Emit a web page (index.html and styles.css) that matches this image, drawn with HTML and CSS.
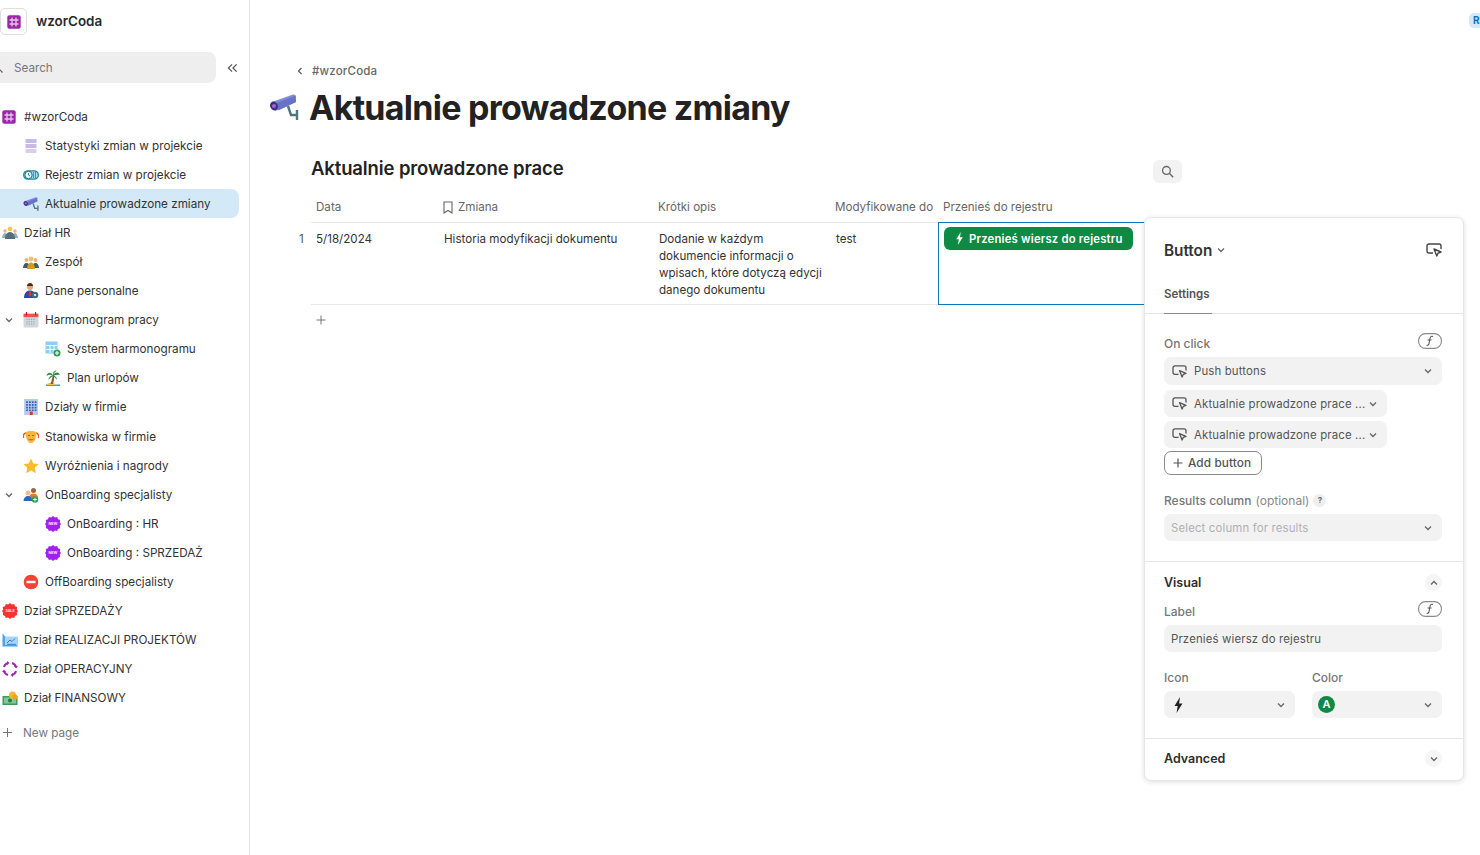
FILE: index.html
```html
<!DOCTYPE html>
<html lang="pl">
<head>
<meta charset="utf-8">
<title>wzorCoda</title>
<link rel="stylesheet" href="styles.css">
</head>
<body>
<svg class="defs" width="0" height="0" aria-hidden="true">
  <symbol id="hash" viewBox="0 0 14 14"><rect x="0.300" y="0.300" width="13.400" height="13.400" rx="2" fill="#9b27a6"/><path d="M5 2.500v9M9 2.500v9M2.500 5h9M2.500 9h9" stroke="#e8c4ec" stroke-width="1.300" fill="none"/></symbol>
  <symbol id="cam" viewBox="0 0 30 26"><path d="M19 12l3 9h6M28 16v10" stroke="#4f7480" stroke-width="2.400" fill="none"/><path d="M3 8L24 .5q2-.5 3 1.500v6L10 16l-4 .5z" fill="#7d8bd8"/><path d="M5 10L26 2l1 6L10 16z" fill="#6673c4"/><ellipse cx="5" cy="12" rx="3.800" ry="4.600" fill="#3c2f7a" transform="rotate(-25 5 12)"/><circle cx="5" cy="12" r="2.100" fill="#a75fe0"/></symbol>
  <symbol id="btn" viewBox="0 0 16 14"><path d="M7 10H3a2 2 0 0 1-2-2V3a2 2 0 0 1 2-2h10a2 2 0 0 1 2 2v3" fill="none" stroke="currentColor" stroke-width="1.400"/><path d="M8 6l7 3-3 1.200L10.800 13z" fill="none" stroke="currentColor" stroke-width="1.400" stroke-linejoin="round"/></symbol>
  <symbol id="chev" viewBox="0 0 8 6"><path d="M1 1.500l3 3 3-3" fill="none" stroke="currentColor" stroke-width="1.300"/></symbol>
  <symbol id="bolt" viewBox="0 0 10 16"><path d="M6.500 0L1 9h3.200L3 16l6-9.500H5.600z" fill="currentColor"/></symbol>
  <symbol id="fx" viewBox="0 0 24 16"><rect x="0.600" y="0.600" width="22.800" height="14.800" rx="7" fill="none" stroke="#8a8a8a" stroke-width="1.100"/><path d="M15 3.500c-2-.7-2.700.2-3 2l-1 5c-.3 1.500-1 2-2.400 1.700M9.500 7h4" fill="none" stroke="#555" stroke-width="1.100"/></symbol>
  <symbol id="burst" viewBox="0 0 16 16"><path d="M8 0l1.900 1.500L12.200 1l.8 2.200 2.200.9-.4 2.300L16 8l-1.200 1.700.4 2.300-2.200.9-.8 2.200-2.300-.5L8 16l-1.900-1.400-2.300.5-.8-2.200-2.200-.9.400-2.300L0 8l1.200-1.600L.8 4.100 3 3.200 3.800 1l2.300.5z" fill="currentColor"/></symbol>
</svg>

<div class="app">
  <aside class="sidebar">
    <div class="brand">
      <span class="brand-box"><svg class="i14"><use href="#hash"/></svg></span>
      <span class="brand-name">wzorCoda</span>
    </div>
    <div class="search-row">
      <div class="search"><svg class="search-ico" viewBox="0 0 12 12"><circle cx="4" cy="4" r="3.200" fill="none" stroke="#666" stroke-width="1.200"/><path d="M6.500 6.500l4 4" stroke="#666" stroke-width="1.200"/></svg><span>Search</span></div>
      <svg class="collapse" viewBox="0 0 12 10"><path d="M5.500 1L1.500 5l4 4M10.500 1L6.500 5l4 4" fill="none" stroke="#555" stroke-width="1.300"/></svg>
    </div>
    <nav class="nav">
      <a class="row l0"><svg class="ico small"><use href="#hash"/></svg>#wzorCoda</a>
      <a class="row l1"><svg class="ico" viewBox="0 0 16 16"><rect x="2.500" y="1" width="11" height="4" fill="#c9b9e8"/><rect x="2.500" y="6" width="11" height="4" fill="#c9b9e8"/><rect x="2.500" y="11" width="11" height="4" fill="#d8cdee"/></svg>Statystyki zmian w projekcie</a>
      <a class="row l1"><svg class="ico" viewBox="0 0 16 10"><rect x="0.600" y="0.800" width="14.800" height="8.400" rx="4.200" fill="#9fe0e8" stroke="#1c8ea0" stroke-width="1.200"/><circle cx="5.500" cy="5" r="3.700" fill="#eef8fa" stroke="#176a80" stroke-width="1"/><path d="M5.500 3v2l1.500 1" stroke="#176a80" stroke-width=".8" fill="none"/><path d="M10.500 2v6M12.500 2v6" stroke="#1c8ea0" stroke-width=".8"/></svg>Rejestr zmian w projekcie</a>
      <a class="row l1 active"><svg class="ico"><use href="#cam"/></svg>Aktualnie prowadzone zmiany</a>
      <a class="row l0"><svg class="ico" viewBox="0 0 16 14"><circle cx="8" cy="3" r="2.300" fill="#f2c14e"/><circle cx="3" cy="5" r="1.700" fill="#f0b090"/><circle cx="13" cy="5" r="1.700" fill="#f0b090"/><path d="M0 12c0-3 2-5 3-5s3 2 3 5zM10 12c0-3 2-5 3-5s3 2 3 5z" fill="#8fb1bd"/><path d="M3 13c0-4 2-7 5-7s5 3 5 7z" fill="#546e7a"/></svg>Dział HR</a>
      <a class="row l1"><svg class="ico" viewBox="0 0 16 14"><circle cx="3.500" cy="5" r="2" fill="#e9b872"/><circle cx="12.500" cy="5" r="2" fill="#e9b872"/><path d="M0 13c0-3 1.500-5 3.500-5S7 10 7 13zM9 13c0-3 1.500-5 3.500-5s3.500 2 3.500 5z" fill="#3d5a78"/><circle cx="8" cy="4" r="2.400" fill="#f0bf70"/><path d="M4 14c0-4 2-6.500 4-6.500S12 10 12 14z" fill="#d59a1e"/></svg>Zespół</a>
      <a class="row l1"><svg class="ico" viewBox="0 0 16 16"><circle cx="7" cy="4" r="3" fill="#e8a37a"/><path d="M4 3c0-2 1.500-3 3-3s3 1 3 3z" fill="#4a2c1d"/><path d="M1 15c0-5 2.500-7.500 6-7.500s6 2.500 6 7.500z" fill="#2e46a8"/><path d="M6 8h2l.5 4L7 14l-1.500-2z" fill="#d33"/><circle cx="12" cy="12" r="3.300" fill="#3f6d80"/><circle cx="12" cy="12" r="1.100" fill="#fff"/></svg>Dane personalne</a>
      <a class="row l1 has-caret"><svg class="caret"><use href="#chev"/></svg><svg class="ico" viewBox="0 0 14 14"><rect x="0.500" y="1.500" width="13" height="12" rx="1" fill="#cfd8dc"/><rect x="0.500" y="1.500" width="13" height="3" fill="#ef5350"/><path d="M3 0v3M11 0v3" stroke="#b71c1c" stroke-width="1"/><path d="M3 6.500h8M3 8.500h8M3 10.500h8" stroke="#90a4ae" stroke-width="1" stroke-dasharray="1 1"/></svg>Harmonogram pracy</a>
      <a class="row l2"><svg class="ico" viewBox="0 0 16 16"><rect x="0.500" y="0.500" width="12" height="12" fill="#90caf9"/><path d="M1 4.500h11M1 8.500h11M5 4v8M9 4v8" stroke="#fff" stroke-width="1"/><circle cx="12" cy="12" r="3.500" fill="#2e9e4f"/><path d="M12 10v4M10 12h4" stroke="#fff" stroke-width="1.100"/></svg>System harmonogramu</a>
      <a class="row l2"><svg class="ico" viewBox="0 0 16 16"><path d="M1 14.500h14V16H1z" fill="#29a9e0"/><path d="M1 15c2-3 8-3 10 0z" fill="#f7c04a"/><path d="M7.500 5c0 3-1 6-2 9h2.500c1-3 1.300-6 1-9z" fill="#8d5a3a"/><path d="M8 5.500C6 1.500 2.500 2 1.500 6c2-1.500 4-1.500 6.500-.5zM8 5.500c2-4 6-4 7-.5-2-.5-4.500 0-7 .5zM8 5.500C7.500 3 9 .5 11.500 .5 9.800 2 9 3.500 8 5.500zM8 5.500C5.500 5.500 3.500 7.500 3.500 10 5 8 7 6.800 8 5.500zM8 5.500c2 0 4 2 4 4.500-1-2-3-3.200-4-4.500z" fill="#2e8b40"/></svg>Plan urlopów</a>
      <a class="row l1"><svg class="ico" viewBox="0 0 14 14"><rect x="1" y="0" width="12" height="14" fill="#b9c8ee"/><path d="M3.500 2v8.500M6 2v8.500M8.500 2v8.500M11 2v8.500" stroke="#2a5cc0" stroke-width="1.500" stroke-dasharray="1.600 .8"/><rect x="6" y="11" width="2.500" height="3" fill="#d33"/></svg>Działy w firmie</a>
      <a class="row l1 nudge"><svg class="ico" viewBox="0 0 16 16"><path d="M3 4c-2 0-3 2-2.500 5M13 4c2 0 3 2 2.500 5" stroke="#e2572c" stroke-width="1.400" fill="none"/><path d="M2.500 3c3-1.500 8-1.500 11 0 0 6-2 11-5.500 11S2.500 9 2.500 3z" fill="#f6b73c"/><path d="M5 6.500h2M9 6.500h2M5.500 10c1.500 1.200 3.500 1.200 5 0" stroke="#a0621a" stroke-width="1" fill="none"/></svg>Stanowiska w firmie</a>
      <a class="row l1"><svg class="ico" viewBox="0 0 16 16"><path d="M8 .500l2.300 5 5.400.6-4 3.700 1.100 5.400L8 12.500l-4.800 2.700 1.100-5.400-4-3.700 5.400-.6z" fill="#fbbc2c"/></svg>Wyróżnienia i nagrody</a>
      <a class="row l1 has-caret"><svg class="caret"><use href="#chev"/></svg><svg class="ico" viewBox="0 0 16 16"><circle cx="10.500" cy="3.500" r="2.500" fill="#a1642e"/><path d="M6 11c0-3 2-4.500 4.500-4.500S15 8 15 11z" fill="#e57c2b"/><circle cx="5" cy="6" r="2.500" fill="#f0bf90"/><path d="M.500 14c0-3 2-5 4.500-5s4.500 2 4.500 5z" fill="#2a66c8"/><circle cx="12" cy="12.500" r="3.200" fill="#2e9e4f"/><path d="M12 10.700v3.600M10.200 12.500h3.600" stroke="#fff"/></svg>OnBoarding specjalisty</a>
      <a class="row l2"><svg class="ico burst new" viewBox="0 0 16 16"><use href="#burst"/><text x="8" y="9.300" font-size="3.800" font-weight="700" text-anchor="middle" fill="#f6e6ff" font-family="Inter">NEW</text></svg>OnBoarding : HR</a>
      <a class="row l2"><svg class="ico burst new" viewBox="0 0 16 16"><use href="#burst"/><text x="8" y="9.300" font-size="3.800" font-weight="700" text-anchor="middle" fill="#f6e6ff" font-family="Inter">NEW</text></svg>OnBoarding : SPRZEDAŻ</a>
      <a class="row l1"><svg class="ico" viewBox="0 0 16 16"><circle cx="8" cy="8" r="7.300" fill="#f44336"/><rect x="3.500" y="6.800" width="9" height="2.400" fill="#fff"/></svg>OffBoarding specjalisty</a>
      <a class="row l0"><svg class="ico burst sale" viewBox="0 0 16 16"><use href="#burst"/><text x="8" y="9.300" font-size="3.600" font-weight="700" text-anchor="middle" fill="#ffe0dc" font-family="Inter">SALE</text></svg>Dział SPRZEDAŻY</a>
      <a class="row l0"><svg class="ico" viewBox="0 0 16 14"><path d="M.500 .5v13h15V4H4C2.500 4 2 1.500 .500 .5z" fill="#4aa3ee"/><path d="M3 3.500h12.500V12H3z" fill="#a9d6f8"/><path d="M5 10l3-3 2 1.500 3-3M5 11.300h9" stroke="#2a7fd0" stroke-width="1" fill="none"/></svg>Dział REALIZACJI PROJEKTÓW</a>
      <a class="row l0"><svg class="ico" viewBox="0 0 16 16"><path d="M2 6c.5-2 2-3.500 4-4M10 2c2 .5 3.500 2 4 4M14 10c-.5 2-2 3.500-4 4M6 14c-2-.5-3.500-2-4-4" fill="none" stroke="#9c27b0" stroke-width="2"/><path d="M5 0l2.500 2L5 4zM16 5l-2 2.500L12 5zM11 16l-2.500-2L11 12zM0 11l2-2.500L4 11z" fill="#9c27b0"/></svg>Dział OPERACYJNY</a>
      <a class="row l0"><svg class="ico" viewBox="0 0 16 14"><rect x="0.500" y="5" width="15" height="9" fill="#3d9a58"/><rect x="2" y="6.500" width="12" height="6" fill="#83c79a"/><circle cx="8" cy="9.500" r="2" fill="#2a7a44"/><circle cx="10.500" cy="4" r="3.500" fill="#f7b733"/><circle cx="13" cy="6" r="2.500" fill="#f2a020"/></svg>Dział FINANSOWY</a>
      <a class="row new-page"><svg class="plus" viewBox="0 0 12 12"><path d="M6 1v10M1 6h10" stroke="#777" stroke-width="1.100"/></svg>New page</a>
    </nav>
  </aside>

  <main class="main">
    <div class="topbar"><span class="badge">R</span></div>
    <div class="crumb"><svg class="crumb-ico" viewBox="0 0 6 8"><path d="M4.500 1l-3 3 3 3" fill="none" stroke="#555" stroke-width="1.200"/></svg><span>#wzorCoda</span></div>
    <h1 class="title"><svg class="title-ico"><use href="#cam"/></svg>Aktualnie prowadzone zmiany</h1>
    <div class="sec-head">
      <h2 class="sec-title">Aktualnie prowadzone prace</h2>
      <span class="search-btn"><svg viewBox="0 0 12 12"><circle cx="5" cy="5" r="3.600" fill="none" stroke="#666" stroke-width="1.200"/><path d="M7.700 7.700l3.500 3.500" stroke="#666" stroke-width="1.300"/></svg></span>
    </div>
    <div class="table">
      <div class="tr thead">
        <div class="th">Data</div>
        <div class="th"><svg class="bookmark" viewBox="0 0 10 13"><path d="M1 1h8v11L5 9.500 1 12z" fill="none" stroke="#666" stroke-width="1.100"/></svg>Zmiana</div>
        <div class="th">Krótki opis</div>
        <div class="th">Modyfikowane do</div>
        <div class="th">Przenieś do rejestru</div>
      </div>
      <div class="tr tbody">
        <div class="td first"><span class="rownum">1</span>5/18/2024</div>
        <div class="td">Historia modyfikacji dokumentu</div>
        <div class="td">Dodanie w każdym dokumencie informacji o wpisach, które dotyczą edycji danego dokumentu</div>
        <div class="td">test</div>
        <div class="td selected"><span class="green-btn"><svg class="bolt-s"><use href="#bolt"/></svg><span class="green-label">Przenieś wiersz do rejestru</span></span></div>
      </div>
      <div class="add-row"><svg viewBox="0 0 10 10"><path d="M5 .5v9M.5 5h9" stroke="#777" stroke-width="1"/></svg></div>
    </div>

    <section class="panel">
      <header class="p-head">
        <span class="p-title">Button<svg class="c8"><use href="#chev"/></svg></span>
        <svg class="p-btn"><use href="#btn"/></svg>
      </header>
      <div class="p-tabs"><span class="p-tab">Settings</span></div>
      <div class="p-sec settings">
        <div class="lbl-row"><span class="lbl">On click</span><svg class="fx"><use href="#fx"/></svg></div>
        <div class="sel full mt6"><svg class="sel-ico"><use href="#btn"/></svg><span class="sel-text">Push buttons</span><svg class="c8"><use href="#chev"/></svg></div>
        <div class="sel mid mt5"><svg class="sel-ico"><use href="#btn"/></svg><span class="sel-text">Aktualnie prowadzone prace ...</span><svg class="c8"><use href="#chev"/></svg></div>
        <div class="sel mid mt4"><svg class="sel-ico"><use href="#btn"/></svg><span class="sel-text">Aktualnie prowadzone prace ...</span><svg class="c8"><use href="#chev"/></svg></div>
        <div class="add-btn"><svg viewBox="0 0 10 10"><path d="M5 .5v9M.5 5h9" stroke="#555" stroke-width="1.200"/></svg>Add button</div>
        <div class="results"><span class="lbl">Results column</span> <span class="opt">(optional)</span><span class="q">?</span></div>
        <div class="sel full slim"><span class="sel-text muted">Select column for results</span><svg class="c8"><use href="#chev"/></svg></div>
      </div>
      <div class="p-sec visual">
        <div class="sec-line"><span class="strong">Visual</span><span class="circ"><svg class="c8 up"><use href="#chev"/></svg></span></div>
        <div class="lbl-row label-row"><span class="lbl">Label</span><svg class="fx"><use href="#fx"/></svg></div>
        <div class="sel full slim input"><span class="sel-text">Przenieś wiersz do rejestru</span></div>
        <div class="two">
          <div><div class="lbl two-lbl">Icon</div><div class="sel slim"><svg class="bolt-b"><use href="#bolt"/></svg><svg class="c8"><use href="#chev"/></svg></div></div>
          <div><div class="lbl two-lbl">Color</div><div class="sel slim color"><span class="a-dot">A</span><svg class="c8"><use href="#chev"/></svg></div></div>
        </div>
      </div>
      <div class="p-sec advanced">
        <div class="sec-line"><span class="strong">Advanced</span><span class="circ"><svg class="c8"><use href="#chev"/></svg></span></div>
      </div>
    </section>
  </main>
</div>
</body>
</html>
```

FILE: styles.css
```css
* { box-sizing: border-box; }
html, body { margin: 0; height: 100%; }
body { font-family: Inter, "Noto Sans", sans-serif; font-size: 11.700px; color: #2b2b2b; background: #fff; overflow: hidden; }
.defs { position: absolute; }
.app { display: flex; height: 855px; width: 1480px; overflow: hidden; }

.sidebar { flex: 0 0 250px; border-right: 1px solid #e4e4e4; display: flex; flex-direction: column; }
.brand { display: flex; align-items: center; height: 27px; margin: 8px 0 0 0; }
.brand-box { width: 27px; height: 27px; border: 1px solid #dedede; border-radius: 5px; display: flex; align-items: center; justify-content: center; }
.i14 { width: 14px; height: 14px; }
.brand-name { margin-left: 9px; padding-bottom: 2px; font-size: 13.400px; font-weight: 600; color: #2a2a2a; }
.search-row { display: flex; align-items: center; margin-top: 17px; }
.search { width: 216px; height: 31px; background: #eeeeee; border-radius: 0 8px 8px 0; display: flex; align-items: center; overflow: hidden; color: #777; padding-left: 14px; position: relative; }
.search-ico { position: absolute; left: -8px; top: 10px; width: 12px; height: 12px; }
.collapse { width: 11px; height: 10px; margin-left: 11px; }
.nav { display: flex; flex-direction: column; margin-top: 19px; }
.row { display: flex; align-items: center; height: 29px; flex: none; color: #333; white-space: nowrap; position: relative; width: 239px; }
.nudge { margin-top: 1px; }
.ico { width: 16px; height: 16px; margin-right: 6px; flex: none; }
.ico.small { width: 14px; height: 14px; margin-right: 8px; }
.new { color: #a21ff0; }
.sale { color: #f5332f; }
.l0 { padding-left: 2px; }
.l1 { padding-left: 23px; }
.l2 { padding-left: 45px; }
.active { background: #d4e9f7; border-radius: 0 8px 8px 0; }
.caret { position: absolute; left: 5px; top: 12px; width: 8px; height: 6px; color: #666; }
.new-page { color: #777; margin-top: 6px; padding-left: 2px; }
.plus { width: 11px; height: 11px; margin-right: 10px; }

.main { flex: 1; position: relative; min-width: 0; padding-top: 13px; }
.topbar { display: flex; justify-content: flex-end; height: 15px; overflow: hidden; }
.badge { width: 18px; height: 15px; margin-right: -7px; background: #d4e9f7; color: #1170b8; font-size: 10px; font-weight: 700; border-radius: 5px 0 0 5px; padding-left: 4px; line-height: 15px; }
.crumb { display: flex; align-items: center; margin: 36px 0 0 47px; height: 14px; color: #666; font-size: 11.500px; font-weight: 500; letter-spacing: .2px; }
.crumb-ico { width: 6px; height: 8px; margin-right: 9px; }
.title { display: flex; align-items: center; margin: 7px 0 0 19px; height: 44px; font-size: 34px; font-weight: 700; letter-spacing: -.74px; color: #222; white-space: nowrap; }
.title-ico { width: 30px; height: 26px; margin-right: 10px; flex: none; }
.sec-head { display: flex; align-items: center; justify-content: space-between; width: 871px; margin: 26px 0 0 61px; height: 26px; }
.sec-title { margin: 0; font-size: 18.500px; font-weight: 600; letter-spacing: -.12px; color: #222; }
.search-btn { width: 29px; height: 23px; background: #f2f2f2; border-radius: 6px; display: flex; align-items: center; justify-content: center; margin-top: 6px; }
.search-btn svg { width: 13px; height: 13px; }

.table { margin: 13px 0 0 61px; width: 833px; }
.tr { display: grid; grid-template-columns: 127px 215px 177px 108px 206px; }
.thead { height: 29px; padding-bottom: 2px; border-bottom: 1px solid #e6e6e6; align-items: center; color: #666; }
.th { padding-left: 5px; display: flex; align-items: center; font-size: 11.600px; white-space: nowrap; }
.bookmark { width: 10px; height: 13px; margin-right: 5px; }
.tbody { height: 82px; border-bottom: 1px solid #e6e6e6; }
.td { padding: 8px 8px 0 6px; line-height: 17px; font-size: 11.600px; position: relative; color: #333; }
.first { padding-left: 5px; }
.rownum { position: absolute; left: -12px; top: 8px; color: #555; }
.selected { border: 1px solid #0a78bd; border-right: 0; padding: 4px 0 0 5px; margin-top: -1px; height: 83px; }
.green-btn { display: flex; align-items: center; width: 189px; height: 23px; background: #0e8a45; border-radius: 6px; color: #fff; font-weight: 600; font-size: 11.300px; letter-spacing: .2px; padding-left: 11px; white-space: nowrap; }
.green-label { padding-top: 1px; }
.bolt-s { width: 9px; height: 13px; margin-right: 5px; color: #fff; }
.add-row { height: 30px; display: flex; align-items: center; padding-left: 5px; }
.add-row svg { width: 10px; height: 10px; }

.panel { position: absolute; left: 894px; top: 217px; width: 320px; height: 564px; background: #fff; border: 1px solid #e6e6e6; border-radius: 7px; box-shadow: 0 1px 5px rgba(0,0,0,.13); display: flex; flex-direction: column; color: #333; }
.p-head { display: flex; justify-content: space-between; align-items: center; height: 64px; padding: 0 21px 0 19px; }
.p-title { font-size: 15.300px; font-weight: 600; display: flex; align-items: center; gap: 5px; }
.c8 { width: 8px; height: 6px; color: #666; flex: none; }
.up { transform: rotate(180deg); }
.p-btn { width: 16px; height: 14px; color: #444; }
.p-tabs { height: 32px; border-bottom: 1px solid #e4e4e4; padding-left: 19px; display: flex; }
.p-tab { width: 48px; height: 32px; border-bottom: 1px solid #888; font-size: 11.500px; font-weight: 600; color: #555; padding-top: 5px; white-space: nowrap; margin-bottom: -1px; }
.p-sec { padding: 0 21px 0 19px; border-bottom: 1px solid #e6e6e6; }
.settings { height: 248px; padding-top: 19px; }
.lbl-row { display: flex; justify-content: space-between; align-items: flex-end; height: 18px; }
.lbl { font-size: 12px; font-weight: 500; color: #777; }
.fx { width: 24px; height: 16px; align-self: flex-start; }
.sel { display: flex; align-items: center; background: #f2f2f2; border-radius: 7px; height: 28px; padding: 0 10px 0 8px; font-size: 11.400px; color: #555; letter-spacing: .15px; }
.sel .c8 { margin-left: auto; }
.full { width: 278px; }
.mid { width: 223px; height: 27px; }
.mt6 { margin-top: 6px; }
.mt5 { margin-top: 5px; }
.mt4 { margin-top: 4px; }
.sel-ico { width: 15px; height: 13px; margin-right: 7px; color: #555; flex: none; }
.sel-text { white-space: nowrap; }
.muted { color: #b0b0b0; }
.add-btn { display: flex; align-items: center; width: 98px; height: 24px; margin-top: 3px; border: 1px solid #888; border-radius: 7px; padding-left: 8px; font-size: 11.800px; font-weight: 500; color: #555; white-space: nowrap; letter-spacing: .1px; }
.add-btn svg { width: 10px; height: 10px; margin-right: 5px; }
.results { display: flex; align-items: center; margin-top: 17px; height: 16px; gap: 4px; }
.opt { color: #888; font-size: 12px; }
.q { width: 13px; height: 13px; border-radius: 50%; background: #eee; font-size: 8px; font-weight: 700; color: #666; text-align: center; line-height: 13px; }
.slim { height: 27px; margin-top: 6px; padding-left: 7px; }
.visual { height: 177px; padding-top: 12px; }
.sec-line { display: flex; justify-content: space-between; align-items: center; height: 17px; }
.strong { font-size: 12.500px; font-weight: 600; color: #2d2d2d; }
.circ { width: 17px; height: 17px; border-radius: 50%; background: #f5f5f5; display: flex; align-items: center; justify-content: center; }
.label-row { margin-top: 2px; height: 25px; align-items: flex-end; }
.label-row .lbl { margin-bottom: -1px; }
.label-row .fx { margin-top: 8px; }
.input { margin-top: 7px; }
.two { display: grid; grid-template-columns: 131px 130px; gap: 17px; margin-top: 18px; }
.two-lbl { line-height: 15px; }
.two .slim { margin-top: 6px; }
.bolt-b { width: 11px; height: 16px; margin-left: 2px; color: #222; }
.color { padding-left: 6px; }
.a-dot { width: 17px; height: 17px; border-radius: 50%; background: #0e8a45; color: #fff; font-size: 11px; font-weight: 600; text-align: center; line-height: 17px; }
.advanced { border-bottom: 0; padding-top: 11px; }
```
